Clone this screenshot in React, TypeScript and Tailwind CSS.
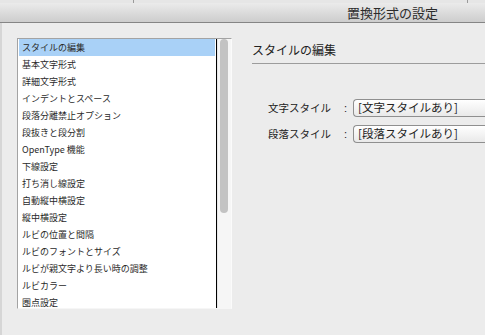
import React from "react";

const ITEMS: string[] = [
  "スタイルの編集",
  "基本文字形式",
  "詳細文字形式",
  "インデントとスペース",
  "段落分離禁止オプション",
  "段抜きと段分割",
  "OpenType 機能",
  "下線設定",
  "打ち消し線設定",
  "自動縦中横設定",
  "縦中横設定",
  "ルビの位置と間隔",
  "ルビのフォントとサイズ",
  "ルビが親文字より長い時の調整",
  "ルビカラー",
  "圏点設定",
];

const FIELDS = [
  { label: "文字スタイル", value: "[文字スタイルあり]" },
  { label: "段落スタイル", value: "[段落スタイルあり]" },
];

const App: React.FC = () => {
  const selected = 0;

  return (
    <div className="w-[485px] h-[335px] overflow-hidden bg-[#ececec] flex flex-col text-[#222] font-['Noto_Sans_CJK_JP',sans-serif]">
      {/* edge of the window behind */}
      <div className="h-[3px] shrink-0 flex bg-[#e6e6e6]">
        <div className="w-[133px]" />
        <div className="w-[334px] border-l border-[#9a9a9a]" />
        <div className="flex-1 border-l border-[#9a9a9a]" />
      </div>

      {/* title bar */}
      <div className="h-[20px] shrink-0 flex items-center justify-end pr-[47px] bg-linear-to-b from-[#ebebeb] to-[#cdcdcd] border-b border-[#858585] text-[13px] leading-none text-[#2b2b2b]">
        置換形式の設定
      </div>

      <div className="flex flex-1 border-l-2 border-[#d6d6d6] pl-[15px] pt-[15px]">
        {/* category list */}
        <div className="w-[215px] h-[271px] shrink-0 flex bg-white border border-t-[#a3a3a3] border-l-[#a3a3a3] border-r-[#fbfbfb] border-b-[#f6f6f6] overflow-hidden">
          <ul className="w-[199px] shrink-0 border-r border-black px-[1px]">
            {ITEMS.map((item, i) => (
              <li
                key={item}
                className={`h-[17px] flex items-center pl-[3px] text-[9px] leading-none whitespace-nowrap text-[#2a2a2a] ${
                  i === selected ? "bg-[#a9d1f7]" : ""
                }`}
              >
                {item}
              </li>
            ))}
          </ul>
          <div className="flex-1 bg-[#f6f6f6] border-l border-[#e6e6e6]">
            <div className="ml-[2px] w-[8px] h-[174px] rounded-full bg-[#c3c3c3]" />
          </div>
        </div>

        {/* settings panel */}
        <div className="flex-1 ml-[20px] flex flex-col">
          <div className="pt-[3px] pb-[5px] text-[12px] leading-[17px] border-b border-[#9c9c9c]">
            スタイルの編集
          </div>
          <div className="mt-[35px] flex flex-col gap-[8px]">
            {FIELDS.map((f) => (
              <div key={f.label} className="flex items-center h-[18px]">
                <div className="w-[101px] shrink-0 flex justify-end items-center text-[10.5px] leading-none">
                  <span>{f.label}</span>
                  <span className="ml-[13px] mr-[6px] font-['Liberation_Sans',sans-serif] text-[11px]">:</span>
                </div>
                <div className="flex-1 h-[18px] flex items-center pl-[4px] rounded-l-[4px] border border-r-0 border-[#8f8f8f] bg-linear-to-b from-white to-[#e9e9e9] text-[11.5px] leading-none whitespace-nowrap">
                  {f.value}
                </div>
              </div>
            ))}
          </div>
        </div>
      </div>
    </div>
  );
};

export default App;
